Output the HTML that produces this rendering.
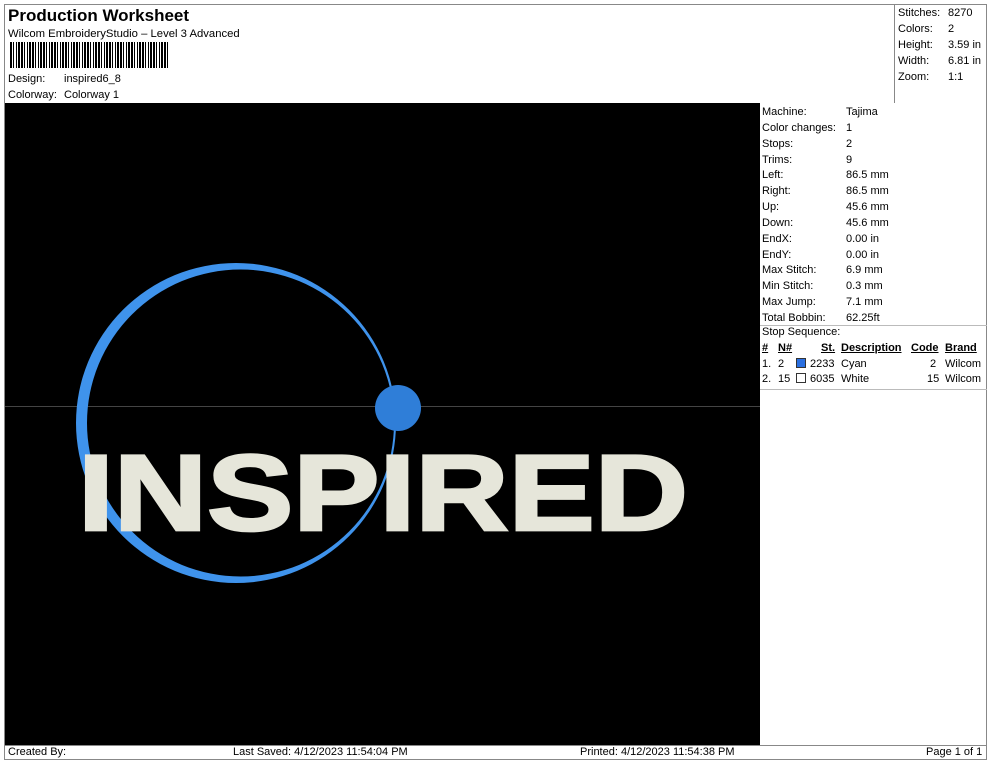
<!DOCTYPE html>
<html><head><meta charset="utf-8"><style>
*{margin:0;padding:0;box-sizing:border-box}
body{width:990px;height:762px;background:#fff;font-family:"Liberation Sans",Arial,sans-serif;color:#000;position:relative;overflow:hidden}
.a{position:absolute;white-space:nowrap}
.s{font-size:11px}
</style></head><body>
<div class="a" style="left:4px;top:4px;width:983px;height:756px;border:1px solid #888"></div>
<div class="a" style="left:8px;top:6px;font-size:17px;font-weight:bold">Production Worksheet</div>
<div class="a s" style="left:8px;top:28px;font-size:11.3px">Wilcom EmbroideryStudio – Level 3 Advanced</div>
<div class="a" style="left:10px;top:42px;width:160px;height:26px;background:repeating-linear-gradient(90deg,#000 0 2px,#fff 2px 3px,#000 3px 4px,#fff 4px 6px,#000 6px 7px,#fff 7px 8px,#000 8px 10px,#fff 10px 11px)"></div>
<div class="a s" style="left:8px;top:73px">Design:</div>
<div class="a s" style="left:64px;top:73px">inspired6_8</div>
<div class="a s" style="left:8px;top:89px">Colorway:</div>
<div class="a s" style="left:64px;top:89px">Colorway 1</div>
<div class="a" style="left:894px;top:4px;width:93px;height:99px;border-left:1px solid #888"></div>
<div class="a s" style="left:898px;top:5px;line-height:16px">Stitches:<br>Colors:<br>Height:<br>Width:<br>Zoom:</div>
<div class="a s" style="left:948px;top:5px;line-height:16px">8270<br>2<br>3.59 in<br>6.81 in<br>1:1</div>
<div class="a" style="left:5px;top:103px;width:755px;height:642px;background:#000;overflow:hidden">
<div class="a" style="left:0;top:303px;width:755px;height:1px;background:#444"></div>
<svg width="755" height="642" style="position:absolute;left:0;top:0">
<path fill-rule="evenodd" fill="#3f93ec" d="M71 320 A160 160 0 1 0 391 320 A160 160 0 1 0 71 320 Z M82 320 A153.5 153.5 0 1 1 389 320 A153.5 153.5 0 1 1 82 320 Z"/>
<circle cx="393" cy="305" r="23" fill="#2f7ed8"/>
<text x="73" y="427" font-family="Liberation Sans,Arial,sans-serif" font-weight="bold" font-size="116" fill="#e6e6da" stroke="#e6e6da" stroke-width="3" textLength="610" lengthAdjust="spacingAndGlyphs" transform="translate(0,427) scale(1,0.93) translate(0,-427)">INSPIRED</text>
</svg>
</div>
<div class="a" style="left:760px;top:103px;width:227px;height:287px;border-bottom:1px solid #bbb"></div>
<div class="a s" style="left:762px;top:105px;line-height:15.85px">Machine:<br>Color changes:<br>Stops:<br>Trims:<br>Left:<br>Right:<br>Up:<br>Down:<br>EndX:<br>EndY:<br>Max Stitch:<br>Min Stitch:<br>Max Jump:<br>Total Bobbin:</div>
<div class="a s" style="left:846px;top:105px;line-height:15.85px">Tajima<br>1<br>2<br>9<br>86.5 mm<br>86.5 mm<br>45.6 mm<br>45.6 mm<br>0.00 in<br>0.00 in<br>6.9 mm<br>0.3 mm<br>7.1 mm<br>62.25ft</div>
<div class="a" style="left:760px;top:325px;width:227px;height:1px;background:#bbb"></div>
<div class="a s" style="left:762px;top:326px">Stop Sequence:</div>
<div class="a s" style="left:762px;top:342px;font-weight:bold;text-decoration:underline">#</div>
<div class="a s" style="left:778px;top:342px;font-weight:bold;text-decoration:underline">N#</div>
<div class="a s" style="left:821px;top:342px;font-weight:bold;text-decoration:underline">St.</div>
<div class="a s" style="left:841px;top:342px;font-weight:bold;text-decoration:underline">Description</div>
<div class="a s" style="left:911px;top:342px;font-weight:bold;text-decoration:underline">Code</div>
<div class="a s" style="left:945px;top:342px;font-weight:bold;text-decoration:underline">Brand</div>
<div class="a s" style="left:762px;top:358px">1.</div><div class="a s" style="left:778px;top:358px">2</div>
<div class="a" style="left:796px;top:358px;width:10px;height:10px;background:#2a6fe0;border:1px solid #333"></div>
<div class="a s" style="left:810px;top:358px">2233</div><div class="a s" style="left:841px;top:358px">Cyan</div>
<div class="a s" style="left:930px;top:358px">2</div><div class="a s" style="left:945px;top:358px">Wilcom</div>
<div class="a s" style="left:762px;top:373px">2.</div><div class="a s" style="left:778px;top:373px">15</div>
<div class="a" style="left:796px;top:373px;width:10px;height:10px;background:#fff;border:1px solid #333"></div>
<div class="a s" style="left:810px;top:373px">6035</div><div class="a s" style="left:841px;top:373px">White</div>
<div class="a s" style="left:927px;top:373px">15</div><div class="a s" style="left:945px;top:373px">Wilcom</div>
<div class="a" style="left:4px;top:745px;width:983px;height:1px;background:#888"></div>
<div class="a s" style="left:8px;top:746px">Created By:</div>
<div class="a s" style="left:233px;top:746px">Last Saved: 4/12/2023 11:54:04 PM</div>
<div class="a s" style="left:580px;top:746px">Printed: 4/12/2023 11:54:38 PM</div>
<div class="a s" style="left:926px;top:746px">Page 1 of 1</div>
</body></html>
